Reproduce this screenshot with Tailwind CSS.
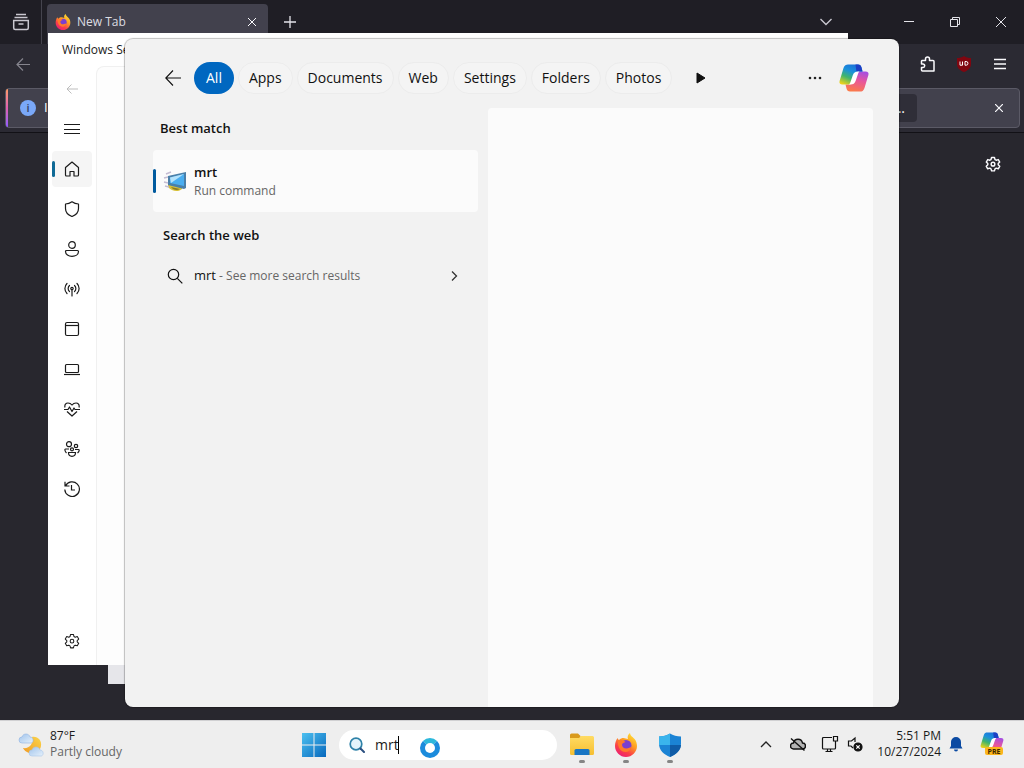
<!DOCTYPE html>
<html lang="en">
<head>
  <meta charset="UTF-8">
  <meta name="viewport" content="width=device-width, initial-scale=1.0">
  <title>Desktop - Search</title>
  <script src="https://cdn.jsdelivr.net/npm/@tailwindcss/browser@4"></script>
</head>
<body class="min-h-screen flex flex-col overflow-hidden bg-[#28272e] font-['Open_Sans','Noto_Sans',sans-serif]">
  <!-- Shared icons -->
  <svg class="absolute w-0 h-0" aria-hidden="true">
    <defs>
      <linearGradient id="cpLeft" x1="0.7" y1="0" x2="0.2" y2="1">
        <stop offset="0" stop-color="#1b6fd8"/><stop offset="0.35" stop-color="#1b90dc"/><stop offset="0.65" stop-color="#3fb56c"/><stop offset="1" stop-color="#ecd21a"/>
      </linearGradient>
      <linearGradient id="cpRight" x1="0.3" y1="1" x2="0.6" y2="0">
        <stop offset="0" stop-color="#a64fe0"/><stop offset="0.45" stop-color="#e8569c"/><stop offset="1" stop-color="#fb7a4a"/>
      </linearGradient>
      <linearGradient id="ffBody" x1="0.8" y1="0" x2="0.2" y2="1">
        <stop offset="0" stop-color="#ffe436"/><stop offset="0.4" stop-color="#ff9a22"/><stop offset="0.7" stop-color="#fb4147"/><stop offset="1" stop-color="#e8187c"/>
      </linearGradient>
      <linearGradient id="winBlue" x1="0" y1="0" x2="1" y2="1">
        <stop offset="0" stop-color="#4cc0f0"/><stop offset="1" stop-color="#0768bd"/>
      </linearGradient>
      <linearGradient id="folder" x1="0" y1="0" x2="0" y2="1">
        <stop offset="0" stop-color="#ffdb63"/><stop offset="1" stop-color="#f6bf31"/>
      </linearGradient>
      <linearGradient id="sun" x1="1" y1="0" x2="0" y2="1">
        <stop offset="0" stop-color="#fbd54a"/><stop offset="1" stop-color="#f09a24"/>
      </linearGradient>
      <linearGradient id="cloud" x1="0" y1="0" x2="1" y2="1">
        <stop offset="0" stop-color="#9fc3ec"/><stop offset="1" stop-color="#e6f1fb"/>
      </linearGradient>
      <symbol id="copilot" viewBox="0 0 30 28">
        <path fill="url(#cpRight)" transform="rotate(180 15 14)" d="M9 .5h10c2 0 3 1 3.500 3l1 4h-3c-3 0-4 1-5 4l-2.500 6.500c-.7 2-2 2.500-4 2.500H3.500C1 20.500 0 19 .6 17L4.500 4C5.500 1 7 .5 9 .5z"/>
        <path fill="url(#cpLeft)" d="M9 .5h10c2 0 3 1 3.500 3l1 4h-3c-3 0-4 1-5 4l-2.500 6.500c-.7 2-2 2.500-4 2.500H3.500C1 20.500 0 19 .6 17L4.500 4C5.500 1 7 .5 9 .5z"/>
        <path fill="#1c3fc4" d="M16.500.5H19c2 0 3 1 3.500 3l1 4h-3c-1.500 0-2.300.2-3 .7z"/>
        <path fill="#fff" d="M20.500 7.500c-.8.600-1.200 1.500-1.600 2.700l-2.200 6.500c-1 2.800-2.500 3.800-5 3.800H9.500c.9-.4 1.500-1.100 1.900-2.300l2.400-6.900c1-2.700 2.300-3.800 5-3.800z"/>
      </symbol>
      <symbol id="firefox" viewBox="0 0 24 24">
        <path fill="url(#ffBody)" d="M3.500 5c.3 1 .8 1.700 1.500 2C6.500 5.500 8 5 9.500 5c1.500.2 3 .5 4.500 1C13 4 14 1.500 16 0c.3 3 3 4 4.800 6.300C22.300 8.300 23 10.500 23 13c0 6-5 11-11 11S1 19 1 13c0-3 1-6 2.500-8z"/>
        <circle cx="12" cy="12.500" r="5.500" fill="#7a3fd0"/>
        <path fill="#ff7a2a" d="M4 8c2.500-1.500 5.500-1 7.500 1-1.500.5-3 1-3.500 2.500 0 2.500 2 4 4.200 4 2.500 0 4-1.500 5.300-1.500-1 3.500-3.500 5-6 5C7 19 3.500 15 4 8z"/>
      </symbol>
      <symbol id="gear" viewBox="0 0 20 20">
        <path fill="none" stroke="currentColor" stroke-linejoin="round" d="M8.200 1.800h3.600l.7 2.600 1.500.9 2.600-.8 1.800 3.100-1.900 1.900v1.500l1.900 1.900-1.800 3.100-2.600-.8-1.500.9-.7 2.500H8.200l-.7-2.500-1.500-.9-2.600.8-1.800-3.100L3.500 11V9.500L1.600 7.600l1.800-3.100 2.600.8 1.500-.9z"/>
        <circle cx="10" cy="10.200" r="2.300" fill="none" stroke="currentColor"/>
      </symbol>
    </defs>
  </svg>

  <main class="relative flex-1">
    <!-- Browser window -->
    <section aria-label="Firefox" class="flex flex-col text-[#fbfbfe]">
      <header class="flex h-11 items-center bg-[#1f1e25]">
        <button aria-label="Recent browsing" class="flex h-11 w-[42px] items-center justify-center border-r border-[#45444e]">
          <svg class="h-[18px] w-[18px]" viewBox="0 0 18 18" fill="none" stroke="#c9c8d0" stroke-width="1.500"><path d="M4 1.500h10M2.500 4.500h13M1.700 7.500h14.600v7.500a1.500 1.500 0 0 1-1.500 1.500H3.200A1.500 1.500 0 0 1 1.700 15zM6.500 11h5"/></svg>
        </button>
        <div class="ml-[5px] mt-1 flex h-10 w-[221px] items-center rounded-t bg-[#42414d] px-2 pb-1">
          <svg class="h-4 w-4"><use href="#firefox"/></svg>
          <span class="ml-1.5 flex-1 text-xs text-[#dddde3]">New Tab</span>
          <button aria-label="Close tab" class="p-1"><svg class="h-2 w-2" viewBox="0 0 8 8" stroke="#fbfbfe"><path d="M0 0l8 8M8 0L0 8"/></svg></button>
        </div>
        <button aria-label="New tab" class="ml-4"><svg class="h-3 w-3" viewBox="0 0 12 12" stroke="#e4e4ea" stroke-width="1.300"><path d="M6 0v12M0 6h12"/></svg></button>
        <div class="ml-auto flex items-center">
          <button aria-label="List all tabs" class="mr-[72px]"><svg class="h-2 w-3" viewBox="0 0 12 8" fill="none" stroke="#c9c8d0" stroke-width="1.400"><path d="M.5 1L6 6.500 11.500 1"/></svg></button>
          <button aria-label="Minimize" class="flex w-[46px]"><svg class="h-2.5 w-2.5" viewBox="0 0 10 10" stroke="#e4e4ea"><path d="M0 4.500h10"/></svg></button>
          <button aria-label="Restore" class="flex w-[46px]"><svg class="h-2.5 w-2.5" viewBox="0 0 10 10" fill="none" stroke="#e4e4ea"><path d="M.5 2.500h7v7h-7zM2.500 2.500v-2h7v7h-2"/></svg></button>
          <button aria-label="Close" class="flex w-7"><svg class="h-2.5 w-2.5" viewBox="0 0 10 10" stroke="#e4e4ea"><path d="M0 0l10 10M10 0L0 10"/></svg></button>
        </div>
      </header>
      <div class="flex h-10 items-center bg-[#2b2a33] pl-4 pr-[18px]">
        <button aria-label="Back"><svg class="h-3.5 w-3.5" viewBox="0 0 14 14" fill="none" stroke="#85848d" stroke-width="1.200"><path d="M14 7.500H1M7 1.500l-6 6 6 6"/></svg></button>
        <button aria-label="Account" class="ml-auto h-3 w-3 rounded-full bg-[#d8d8de]"></button>
        <button aria-label="Extensions" class="ml-[21px]">
          <svg class="h-4 w-4" viewBox="0 0 16 16" fill="none" stroke="#fbfbfe" stroke-width="1.500" stroke-linejoin="round"><path d="M2 4.500h3.500V3a2 2 0 0 1 4 0v1.500H13a1 1 0 0 1 1 1V15H2.500a1 1 0 0 1-1-1v-2.500H3a1.700 1.700 0 0 0 0-3.400H1.500V5z"/></svg>
        </button>
        <button aria-label="uBlock" class="ml-5">
          <svg class="h-4 w-4" viewBox="0 0 16 16"><path fill="#800610" d="M8 0c2 1.500 4.500 2 7 2v6c0 4-3 6.500-7 8-4-1.500-7-4-7-8V2c2.500 0 5-.5 7-2z"/><path fill="none" stroke="#fff" d="M4 5.500v3.700h2.500V5.500M9 5.500h1.200a1.700 1.800 0 0 1 0 3.700H9z"/></svg>
        </button>
        <button aria-label="Menu" class="ml-[22px]"><svg class="h-3 w-3" viewBox="0 0 12 12" stroke="#fbfbfe" stroke-width="1.400"><path d="M0 1.500h12M0 6h12M0 10.500h12"/></svg></button>
      </div>
      <div class="border-b border-[#121116] bg-[#2b2a33] pb-1 pl-[5px] pr-1 pt-1">
        <div class="flex h-10 items-center rounded border border-[#5b5a66] bg-[#42414d] pr-4">
          <div class="h-full w-0.5 rounded-l bg-linear-to-b from-[#ff9a62] via-[#e05fb0] to-[#9059ff]"></div>
          <div class="ml-3 flex h-4 w-4 items-center justify-center rounded-full bg-[#7aa8f8] text-[11px] font-semibold text-[#33415e]">i</div>
          <span class="ml-2 text-[13px]">I</span>
          <button class="ml-auto flex h-7 w-20 items-center justify-end rounded bg-[#2f2e38] pr-3 text-sm">...</button>
          <button aria-label="Dismiss" class="ml-[78px]"><svg class="h-2 w-2" viewBox="0 0 8 8" stroke="#fbfbfe" stroke-width="1.200"><path d="M0 0l8 8M8 0L0 8"/></svg></button>
        </div>
      </div>
      <div class="flex justify-end pr-[23px] pt-[23px]">
        <button aria-label="Personalize new tab"><svg class="h-4 w-4" stroke-width="1.800"><use href="#gear"/></svg></button>
      </div>
    </section>

    <!-- Window behind -->
    <div class="absolute bottom-9 left-[108px] right-48 h-10 bg-[#e6e6ea]"></div>

    <!-- Windows Security window -->
    <section aria-label="Windows Security" class="absolute bottom-[55px] left-12 right-44 top-[33px] flex flex-col bg-white text-[#1b1b1b]">
      <h1 class="h-[33px] pl-3.5 text-xs leading-[34px]">Windows Security</h1>
      <div class="flex flex-1">
        <nav class="flex w-12 flex-col items-center gap-1 pb-1.5 pt-[5px]">
          <button aria-label="Back" class="flex h-9 w-10 items-center justify-center"><svg class="h-3 w-3" viewBox="0 0 12 12" fill="none" stroke="#bdbdbd"><path d="M12 6H1M5.500 1.500L1 6l4.500 4.500"/></svg></button>
          <button aria-label="Menu" class="flex h-9 w-10 items-center justify-center"><svg class="h-4 w-4" viewBox="0 0 16 16" stroke="currentColor"><path d="M0 3.500h16M0 8.500h16M0 12.500h16"/></svg></button>
          <a href="#home" aria-label="Home" class="flex h-9 w-10 items-center rounded bg-[#f5f5f5]">
            <span class="h-4 w-[3px] rounded-full bg-[#0f6a96]"></span>
            <svg class="ml-[9px] h-4 w-4" viewBox="0 0 16 16" fill="none" stroke="currentColor" stroke-width="1.200" stroke-linejoin="round"><path d="M1.500 6.500L8 1l6.500 5.500V14a1 1 0 0 1-1 1H10v-4.500H6V15H2.500a1 1 0 0 1-1-1z"/></svg>
          </a>
          <a href="#virus" aria-label="Virus protection" class="flex h-9 w-10 items-center justify-center"><svg class="h-4 w-4" viewBox="0 0 16 16" fill="none" stroke="currentColor" stroke-width="1.200" stroke-linejoin="round"><path d="M8 .8c2 1.500 4 2.200 6.500 2.200v4.500c0 4-2.500 6.500-6.500 8-4-1.500-6.500-4-6.500-8V3C4 3 6 2.300 8 .8z"/></svg></a>
          <a href="#account" aria-label="Account protection" class="flex h-9 w-10 items-center justify-center"><svg class="h-4 w-4" viewBox="0 0 16 16" fill="none" stroke="currentColor" stroke-width="1.200"><circle cx="8" cy="4" r="3.300"/><path d="M2.500 9.500h11a1 1 0 0 1 1 1c0 3-3 4.800-6.500 4.800s-6.500-1.800-6.500-4.800a1 1 0 0 1 1-1z"/></svg></a>
          <a href="#firewall" aria-label="Firewall" class="flex h-9 w-10 items-center justify-center"><svg class="h-4 w-4" viewBox="0 0 16 16" fill="none" stroke="currentColor" stroke-width="1.200" stroke-linecap="round"><circle cx="8" cy="7.500" r="1.200"/><path d="M8 9v6M5.500 4.500a4 4 0 0 0 0 6M10.500 4.500a4 4 0 0 1 0 6M3 2.500a7 7 0 0 0 0 10M13 2.500a7 7 0 0 1 0 10"/></svg></a>
          <a href="#apps" aria-label="App control" class="flex h-9 w-10 items-center justify-center"><svg class="h-4 w-4" viewBox="0 0 16 16" fill="none" stroke="currentColor" stroke-width="1.200"><rect x="1.500" y="1.500" width="13" height="13" rx="1.500"/><path d="M1.500 4.500h13"/></svg></a>
          <a href="#device" aria-label="Device security" class="flex h-9 w-10 items-center justify-center"><svg class="h-4 w-4" viewBox="0 0 16 16" fill="none" stroke="currentColor" stroke-width="1.200"><rect x="1.500" y="3.500" width="13" height="8" rx="1"/><path d="M0 13.500h16"/></svg></a>
          <a href="#health" aria-label="Device health" class="flex h-9 w-10 items-center justify-center"><svg class="h-4 w-4" viewBox="0 0 16 16" fill="none" stroke="currentColor" stroke-width="1.200" stroke-linejoin="round"><path d="M1 6.500C.3 3.500 2 2 4 2c2 0 3.200 1 4 2 .8-1 2-2 4-2s3.700 1.500 3 4.500M0 8.500h4l1.500-2.500 2.500 4.500 2-3.500 1 1.500h5M3 10.500l5 4.500 5-4.500"/></svg></a>
          <a href="#family" aria-label="Family options" class="flex h-9 w-10 items-center justify-center"><svg class="h-4 w-4" viewBox="0 0 16 16" fill="none" stroke="currentColor" stroke-width="1.200"><circle cx="5" cy="3.200" r="2.500"/><circle cx="12" cy="5" r="1.700"/><circle cx="8" cy="8.300" r="1.500"/><path d="M4.500 11.500h7c0 2.500-1.500 3.800-3.500 3.800s-3.500-1.300-3.500-3.800zM5 8H1.500C.7 8 .5 10 2.500 12M11 8.500h3.500c1 0 1 2-1 3.500"/></svg></a>
          <a href="#history" aria-label="Protection history" class="flex h-9 w-10 items-center justify-center"><svg class="h-4 w-4" viewBox="0 0 16 16" fill="none" stroke="currentColor" stroke-width="1.200"><path d="M1.500 5A7.300 7.300 0 1 1 .8 8.500M1 .8V5h4.500M7.500 4v5H11"/></svg></a>
          <a href="#settings" aria-label="Settings" class="mt-auto flex h-9 w-10 items-center justify-center"><svg class="h-4 w-4" stroke-width="1.300"><use href="#gear"/></svg></a>
        </nav>
        <div class="flex-1 rounded-tl-lg border-l border-t border-[#f0f0f0] bg-[#fdfdfd]"></div>
      </div>
    </section>

    <!-- Search panel -->
    <section aria-label="Search" class="absolute bottom-[13px] left-[125px] right-[125px] top-[39px] flex flex-col overflow-hidden rounded-lg bg-[#f2f2f2] text-[#111] shadow-[0_0_1px_1px_rgba(0,0,0,0.25)]">
      <header class="flex h-[69px] items-center gap-1 pb-[14px] pl-10 pr-[30px] pt-[23px] text-sm">
        <button aria-label="Back" class="mr-[9px]"><svg class="h-4 w-4" viewBox="0 0 16 16" fill="none" stroke="currentColor" stroke-width="1.100"><path d="M16 8H1M8 .5L.8 8 8 15.500"/></svg></button>
        <button class="h-8 rounded-full bg-[#0067c0] px-3 text-white">All</button>
        <button class="h-8 rounded-full border border-[#ececec] bg-[#f4f4f4] px-2.5">Apps</button>
        <button class="h-8 rounded-full border border-[#ececec] bg-[#f4f4f4] px-2.5">Documents</button>
        <button class="h-8 rounded-full border border-[#ececec] bg-[#f4f4f4] px-2.5">Web</button>
        <button class="h-8 rounded-full border border-[#ececec] bg-[#f4f4f4] px-2.5">Settings</button>
        <button class="h-8 rounded-full border border-[#ececec] bg-[#f4f4f4] px-2.5">Folders</button>
        <button class="h-8 rounded-full border border-[#ececec] bg-[#f4f4f4] px-2.5">Photos</button>
        <button aria-label="More filters" class="ml-5"><svg class="h-3 w-2.5" viewBox="0 0 10 12"><path fill="#111" stroke="#111" stroke-linejoin="round" d="M1 1l8 5-8 5z"/></svg></button>
        <button aria-label="Options" class="ml-auto"><svg class="h-1 w-3.5" viewBox="0 0 14 4" fill="#222"><circle cx="2" cy="2" r="1.300"/><circle cx="7" cy="2" r="1.300"/><circle cx="12" cy="2" r="1.300"/></svg></button>
        <button aria-label="Copilot" class="ml-[13px]"><svg class="h-7 w-[30px]"><use href="#copilot"/></svg></button>
      </header>
      <div class="flex flex-1 pr-[26px]">
        <div class="w-[363px] pl-7 pr-2.5">
          <h2 class="mb-0.5 pl-[7px] text-[13px] font-semibold leading-10">Best match</h2>
          <a href="#mrt" class="flex h-[62px] items-center rounded bg-[#fbfbfb]">
            <span class="h-6 w-[3px] rounded-full bg-[#005a9e]"></span>
            <svg class="ml-[7px] h-6 w-6" viewBox="0 0 24 24">
              <path fill="#d8c23a" d="M5 14l14 4v2c-3 3-10 3-14-2z"/>
              <path fill="#8a7a2a" d="M8 18l9 2c-3 2-7 1-9-2z"/>
              <path fill="#4a7fa8" d="M5 7l18-4v16l-2 1-16-4z"/>
              <path fill="#4aaef0" d="M7 8.500L21 5v12L7 14z"/>
              <path fill="#b4e2fb" d="M7 8.500L21 5 8 14z"/>
              <path fill="none" stroke="#c4bcd2" stroke-width="1.500" d="M3 5l5-2M1 9l4-1M1 13l4 1M2 17l4 1"/>
            </svg>
            <span class="ml-[7px] flex flex-col">
              <span class="text-[13px] font-semibold leading-5">mrt</span>
              <span class="text-xs leading-[18px] text-[#666]">Run command</span>
            </span>
          </a>
          <h2 class="pl-2.5 text-[13px] font-semibold leading-[46px]">Search the web</h2>
          <a href="#web" class="flex h-9 items-center pl-3.5 pr-5">
            <svg class="h-4 w-4" viewBox="0 0 16 16" fill="none" stroke="currentColor" stroke-width="1.200"><circle cx="6.500" cy="6.500" r="5.200"/><path d="M10.300 10.300l5 5"/></svg>
            <span class="ml-[11px] flex-1 text-xs text-[#666]"><span class="text-[13px] text-[#111]">mrt</span> - See more search results</span>
            <svg class="h-2.5 w-2" viewBox="0 0 8 10" fill="none" stroke="#333" stroke-width="1.300"><path d="M2 .5L6.500 5 2 9.500"/></svg>
          </a>
        </div>
        <div class="flex-1 rounded-t bg-[#fbfbfb]"></div>
      </div>
    </section>
  </main>

  <!-- Taskbar -->
  <footer class="flex h-12 items-center border-t border-[#d0d0d2] bg-[#eeeeee] pr-5 text-xs leading-4 text-[#1b1b1b]">
    <button class="flex w-[302px] items-center gap-1.5 pl-[18px] text-left">
      <svg class="h-[26px] w-[26px]" viewBox="0 0 26 26">
        <path fill="url(#sun)" d="M14 5c6-1 10 4 9 9-1 6-7 9-12 7-3-1-5-3-6-5 6 1 11-4 9-11z"/>
        <path fill="url(#cloud)" stroke="#8fb2e2" stroke-width=".6" d="M4 11a3 3 0 0 1 0-6c1-4 7-4 8 0 4 0 4 6 1 6z"/>
        <path fill="url(#cloud)" stroke="#a9c6ea" stroke-width=".6" d="M14 24a3 3 0 0 1 0-6c1-4 7-4 8 0 4 0 4 6 1 6z"/>
      </svg>
      <span class="pb-0.5">87°F<br><span class="text-[#666]">Partly cloudy</span></span>
    </button>
    <button aria-label="Start"><svg class="h-6 w-6" viewBox="0 0 24 24" fill="url(#winBlue)"><path d="M0 0h11.500v11.500H0zM12.500 0H24v11.500H12.500zM0 12.500h11.500V24H0zM12.500 12.500H24V24H12.500z"/></svg></button>
    <label class="relative ml-[13px] flex h-[30px] w-[218px] items-center rounded-full bg-white pl-2.5">
      <svg class="h-4 w-4" viewBox="0 0 16 16" fill="none" stroke-linecap="round"><circle cx="7" cy="7" r="5.800" fill="#e3f4fb" stroke="#2f82a8" stroke-width="1.700"/><path stroke="#2b4f80" stroke-width="2" d="M11.500 11.500l3.500 3.500"/></svg>
      <input type="text" aria-label="Search" value="mrt" class="ml-2.5 w-40 bg-transparent text-sm outline-none">
      <span class="absolute left-[59px] top-1.5 h-[18px] w-px bg-black"></span>
      <span class="absolute left-[81px] top-2 h-5 w-5 rounded-full border-[5px] border-[#1b8bdc] border-t-[#2cb8dc] bg-white"></span>
    </label>
    <div class="ml-[13px] flex items-center gap-5">
      <button aria-label="File Explorer" class="flex flex-col items-center gap-[3px] pt-1.5">
        <svg class="h-6 w-6" viewBox="0 0 24 24"><path fill="#d99a1c" d="M0 2a1.500 1.500 0 0 1 1.500-1.500H8L10.500 3v4H0z"/><path fill="url(#folder)" d="M0 5h9l2-2h11.500A1.500 1.500 0 0 1 24 4.500v16a1.500 1.500 0 0 1-1.500 1.500h-21A1.500 1.500 0 0 1 0 20.500z"/><path fill="#1976c4" d="M4.500 17.500A1.500 1.500 0 0 1 6 16h12a1.500 1.500 0 0 1 1.500 1.500V22h-15z"/></svg>
        <span class="h-[3px] w-1.5 rounded-full bg-[#858585]"></span>
      </button>
      <button aria-label="Firefox" class="flex flex-col items-center gap-[3px] pt-1.5">
        <svg class="h-6 w-6"><use href="#firefox"/></svg>
        <span class="h-[3px] w-1.5 rounded-full bg-[#858585]"></span>
      </button>
      <button aria-label="Windows Security" class="flex flex-col items-center gap-[3px] pt-1.5">
        <svg class="h-6 w-6" viewBox="0 0 24 24"><path fill="#1b83d4" d="M12 .5c3 2 7 3 11 3v7c0 7-5 11-11 13.500C6 21.500 1 17.500 1 10.500v-7c4 0 8-1 11-3z"/><path fill="#3ab4ec" d="M12 .5V12H1V3.500c4 0 8-1 11-3z"/><path fill="#0f5ba6" d="M12 12h11c-.5 6-5.500 9.500-11 12z"/></svg>
        <span class="h-[3px] w-1.5 rounded-full bg-[#858585]"></span>
      </button>
    </div>
    <div class="ml-auto flex items-center pb-0.5">
      <button aria-label="Show hidden icons"><svg class="h-2 w-3" viewBox="0 0 12 8" fill="none" stroke="#222" stroke-width="1.300"><path d="M1 7l5-5 5 5"/></svg></button>
      <button aria-label="OneDrive" class="ml-[18px]"><svg class="h-4 w-4" viewBox="0 0 16 16" fill="#b4b4b4" stroke="#111" stroke-width="1.400"><path d="M3.500 13a3 3 0 0 1 0-6c1-5 8-5 9 0a3 3 0 0 1 0 6z"/><path d="M1 2.500l13.500 12"/></svg></button>
      <button aria-label="Network" class="ml-[15px]"><svg class="h-[18px] w-[18px]" viewBox="0 0 18 18" fill="none" stroke="#111" stroke-width="1.200"><path d="M11 2.500H2.500a1 1 0 0 0-1 1V13a1 1 0 0 0 1 1h11a1 1 0 0 0 1-1V8M6.500 14v2.500M9.500 14v2.500M4.500 16.500h7"/><path d="M12.500 1.500h4V6h-4zM14.500 6v2"/></svg></button>
      <button aria-label="Volume muted" class="ml-2"><svg class="h-4 w-4" viewBox="0 0 16 16" fill="none" stroke="#111" stroke-width="1.200"><path d="M8 6V2L4.500 5H1.500v5H4l2 2"/><circle cx="11" cy="11" r="4" fill="#111"/><path stroke="#fff" d="M9.300 9.300l3.400 3.400M12.700 9.300l-3.400 3.400"/></svg></button>
      <button class="ml-3.5 text-right">5:51 PM<br>10/27/2024</button>
      <button aria-label="Notifications" class="ml-2"><svg class="h-4 w-3.5" viewBox="0 0 14 16" fill="#0b4aa2"><path d="M7 1a5 5 0 0 1 5 5v4l1.500 2.500H.5L2 10V6a5 5 0 0 1 5-5zM5 13.500h4a2 2 0 0 1-4 0z"/></svg></button>
      <button aria-label="Copilot preview" class="ml-[17px]">
        <svg class="h-6 w-6" viewBox="0 0 24 24"><use href="#copilot" width="24" height="22"/><rect x="5" y="15" width="18" height="8" rx="2" fill="#fcb61c"/><text x="14" y="22" text-anchor="middle" font-size="7" font-weight="700" fill="#3a2600">PRE</text></svg>
      </button>
    </div>
  </footer>
</body>
</html>
